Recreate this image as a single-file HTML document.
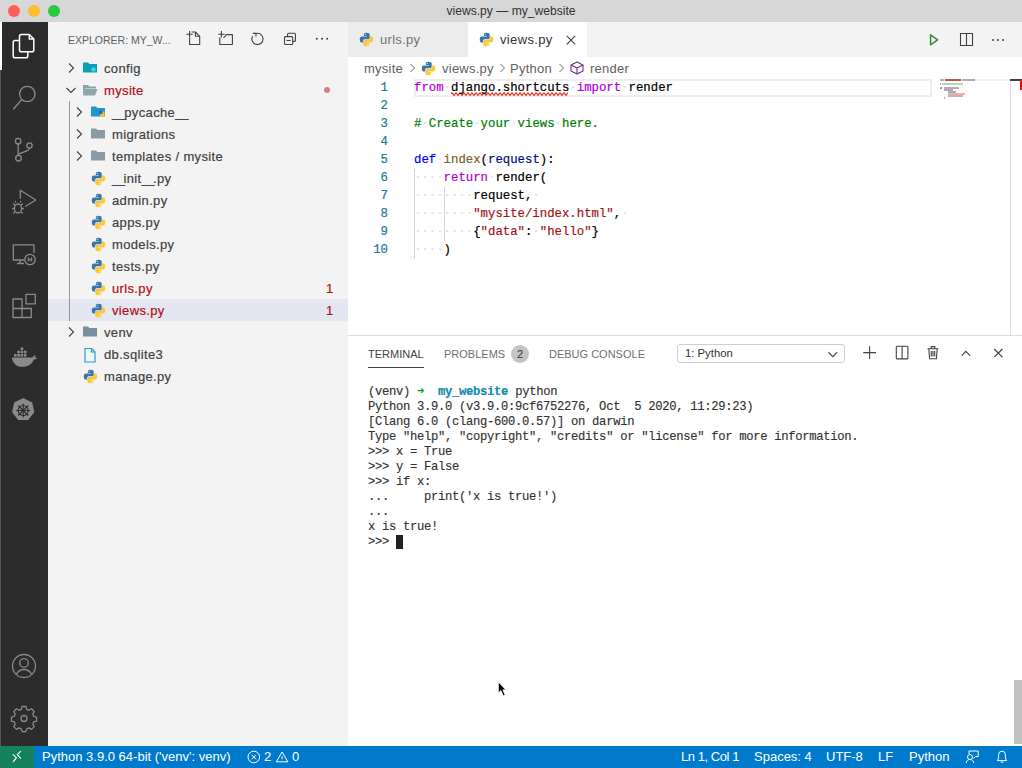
<!DOCTYPE html>
<html><head><meta charset="utf-8">
<style>
*{box-sizing:border-box;margin:0;padding:0}
html,body{width:1022px;height:768px;overflow:hidden;background:#fff;font-family:"Liberation Sans",sans-serif}
.abs{position:absolute}
svg{position:absolute;overflow:visible}
#title{left:0;top:0;width:1022px;height:22px;background:#d7d7d7;color:#333;font-size:12.1px;text-align:center;line-height:23px}
.tl{position:absolute;top:5px;width:12px;height:12px;border-radius:50%}
#act{left:0;top:22px;width:48px;height:724px;background:#2c2c2c}
#side{left:48px;top:22px;width:300px;height:724px;background:#f3f3f3}
#tabs{left:348px;top:22px;width:674px;height:35px;background:#f3f3f3}
#editor{left:348px;top:57px;width:674px;height:278px;background:#fff}
#panel{left:348px;top:335px;width:674px;height:411px;background:#fff;border-top:1px solid #dcdcdc}
#status{left:0;top:746px;width:1022px;height:22px;background:#007acc;color:#fff;font-size:13px;line-height:22px;white-space:nowrap}
.row{position:absolute;left:0;width:300px;height:22px;font-size:13px;line-height:22px;color:#424242;white-space:nowrap;letter-spacing:0.35px;-webkit-text-stroke:0.2px}
.row .t{position:absolute;top:1px}
.code{position:absolute;left:0;top:22px;width:674px;font-family:"Liberation Mono",monospace;font-size:12.33px;white-space:pre;-webkit-text-stroke:0.2px}
.ln{position:absolute;left:0;width:40px;text-align:right;color:#237893;height:18px;line-height:18px}
.cl{position:absolute;left:66px;height:18px;line-height:18px;color:#000}
.k{color:#af00db}.d{color:#0000ff}.f{color:#795e26}.p{color:#001080}.s{color:#a31515}.c{color:#008000}.w{color:#dedede}
.term{position:absolute;left:20px;top:49px;font-family:"Liberation Mono",monospace;font-size:12.2px;letter-spacing:-0.31px;white-space:pre;color:#333;line-height:15px;-webkit-text-stroke:0.15px #333}
.ptab{position:absolute;top:11px;font-size:11px;line-height:14px;color:#6f6f6f;white-space:nowrap}
.sb{position:absolute;top:0}
</style></head><body>
<svg width="0" height="0" style="position:absolute"><defs>
<symbol id="py" viewBox="0 0 16 16">
<path d="M7.8 0.8C5.2 0.8 5.2 2 5.2 2.6V4.3H8.4V4.9H3C1.6 4.9 0.8 6 0.8 8s0.8 3.2 2 3.2H4.4V9.4C4.4 8.3 5.2 7.6 6.2 7.6H9.8C10.8 7.6 11.4 6.9 11.4 6V2.6C11.4 1.6 10.4 0.8 7.8 0.8z" fill="#3a75b0"/>
<path d="M8.2 15.2C10.8 15.2 10.8 14 10.8 13.4V11.7H7.6V11.1H13C14.4 11.1 15.2 10 15.2 8s-0.8-3.2-2-3.2H11.6V6.6C11.6 7.7 10.8 8.4 9.8 8.4H6.2C5.2 8.4 4.6 9.1 4.6 10V13.4C4.6 14.4 5.6 15.2 8.2 15.2z" fill="#fdc834"/>
<circle cx="6.7" cy="2.6" r="0.6" fill="#fff"/><circle cx="9.3" cy="13.4" r="0.6" fill="#fff"/>
</symbol></defs></svg>
<div id="title" class="abs">views.py — my_website
  <div class="tl" style="left:8px;background:#fe5f57"></div>
  <div class="tl" style="left:28px;background:#febc2e"></div>
  <div class="tl" style="left:48px;background:#28c840"></div>
</div>

<div id="act" class="abs">
  <div class="abs" style="left:0;top:48px;width:1px;height:676px;background:#55555a"></div>
  <div class="abs" style="left:0;top:0;width:2px;height:48px;background:#fff"></div>
  <svg width="48" height="724" style="left:0;top:-22px" fill="none" stroke-linejoin="round">
    <!-- files -->
    <g stroke="#fff" stroke-width="1.5">
      <path d="M19.5 40.5h-4.5a1.8 1.8 0 0 0-1.8 1.8V56a1.8 1.8 0 0 0 1.8 1.8h11a1.8 1.8 0 0 0 1.8-1.8v-4"/>
      <path d="M21.3 34.5h8l4.5 4.5v11a1.8 1.8 0 0 1-1.8 1.8h-10.7a1.8 1.8 0 0 1-1.8-1.8V36.3a1.8 1.8 0 0 1 1.8-1.8z"/>
      <path d="M29.3 34.5v4.5h4.5"/>
    </g>
    <g stroke="#8a8a8a" stroke-width="1.3">
      <!-- search -->
      <circle cx="27.3" cy="94" r="7.7"/><path d="M21.8 99.5 13.3 109.3"/>
      <!-- scm -->
      <circle cx="18.2" cy="141.2" r="2.8"/><circle cx="29.5" cy="145.5" r="2.6"/><circle cx="18.5" cy="158.2" r="2.8"/>
      <path d="M18.2 144v11.4"/><path d="M29.5 148.1c0 4.5-11 3.5-11 7.3"/>
      <!-- debug -->
      <path d="M20.3 198.5v-8.2L35.8 200l-10.5 6.5"/>
      <ellipse cx="18" cy="208.5" rx="3.6" ry="4.5"/>
      <path d="M13.3 203.5l1.8 1.8M22.7 203.5l-1.8 1.8M12 208.5h2.4M24 208.5h-2.4M13.3 213.5l1.8-1.8M22.7 213.5l-1.8-1.8M16 202.5l-1-1.5M20 202.5l1-1.5"/>
      <!-- remote explorer -->
      <path d="M24.5 260H13.3V244.8h20.7V253"/><path d="M17 263.5h7M20 260v3.5"/>
      <circle cx="30" cy="259.5" r="5.2"/><path d="M27.8 257.8l1.5 1.7-1.5 1.7M32.2 257.8l-1.5 1.7 1.5 1.7"/>
      <!-- extensions -->
      <path d="M13 299h9v9.5h-9zM13 308.5h9v9h-9zM22 308.5h9.3v9H22z"/><path d="M26 294.3h9.3v9.5H26z"/>
      <!-- accounts -->
      <circle cx="24" cy="666" r="11.5"/><circle cx="24" cy="663" r="4.3"/><path d="M16.3 674.5c1.8-3.5 4.5-5 7.7-5s5.9 1.5 7.7 5"/>
      <!-- settings -->
      <path d="M22 706.5h4l.7 2.8 2.3 1 2.5-1.5 2.8 2.8-1.5 2.5 1 2.3 2.8.7v4l-2.8.7-1 2.3 1.5 2.5-2.8 2.8-2.5-1.5-2.3 1-.7 2.8h-4l-.7-2.8-2.3-1-2.5 1.5-2.8-2.8 1.5-2.5-1-2.3-2.8-.7v-4l2.8-.7 1-2.3-1.5-2.5 2.8-2.8 2.5 1.5 2.3-1z"/>
      <circle cx="24" cy="718.5" r="3"/>
    </g>
    <!-- docker -->
    <path d="M11.8 357.5h21c.5-1.5 1.5-2.5 2.3-2.5.3 1 .2 1.8 0 2.2 1 .2 1.5.5 1.9 1-1 1-2.2 1.3-3.2 1.3-1.5 4.5-5.5 7.3-11.5 7.3-6 0-9.5-3.5-10.5-9.3z" fill="#8a8a8a"/>
    <g fill="#8a8a8a"><rect x="14" y="354" width="2.6" height="2.6"/><rect x="17.3" y="354" width="2.6" height="2.6"/><rect x="20.6" y="354" width="2.6" height="2.6"/><rect x="23.9" y="354" width="2.6" height="2.6"/><rect x="17.3" y="350.7" width="2.6" height="2.6"/><rect x="20.6" y="350.7" width="2.6" height="2.6"/><rect x="23.9" y="350.7" width="2.6" height="2.6"/><rect x="20.6" y="347.4" width="2.6" height="2.6"/></g>
    <!-- kubernetes -->
    <path d="M23.2 399l8.3 4 2 9-5.7 7.2h-9.2l-5.7-7.2 2-9z" fill="#8a8a8a" stroke="#8a8a8a" stroke-width="1.5"/>
    <g stroke="#2c2c2c" stroke-width="1.1"><circle cx="23.2" cy="410.5" r="5"/><path d="M23.2 403.5v14M16.2 410.5h14M18.2 405.5l10 10M28.2 405.5l-10 10"/></g>
  </svg>
</div>

<div id="side" class="abs">
  <div class="abs" style="left:20px;top:11px;font-size:10.5px;color:#616161;line-height:14px;white-space:nowrap">EXPLORER: MY_W...</div>
  <!-- header icons -->
  <svg width="300" height="40" style="left:-48px;top:-22px" fill="none" stroke="#424242" stroke-width="1.1" stroke-linejoin="round">
    <path d="M186.3 34.2H192.8M189.6 31V37.4"/>
    <path d="M189.6 37.4V44.5H199.7V36.3L195.4 32H191.6"/><path d="M195.4 32V36.3H199.7"/>
    <path d="M218.2 34.2H224.6M221.4 31V37.4"/>
    <path d="M219.8 37.4V44.5H232.4V34.6H226.2L224.4 37.2H223.2"/>
    <path d="M255.8 33.6A5.6 5.6 0 1 1 252.6 36.2"/><path d="M252.8 33.4H256V36.6"/>
    <rect x="284.5" y="36.6" width="8.2" height="7.9" rx="1"/><path d="M286.5 40.5H290.7"/>
    <path d="M287.6 36.6V34.3a1 1 0 0 1 1-1H294.4a1 1 0 0 1 1 1V40.4a1 1 0 0 1-1 1H292.7"/>
    <g fill="#424242" stroke="none"><circle cx="316.8" cy="38.8" r="1"/><circle cx="322" cy="38.8" r="1"/><circle cx="327.1" cy="38.8" r="1"/></g>
  </svg>

  <!-- tree -->
  <div class="row" style="top:277px;background:#e4e6f1"></div>
  <div class="abs" style="left:21px;top:79px;width:1px;height:220px;background:#9a9a9a"></div>

  <svg width="16" height="16" style="left:15px;top:38px" fill="none" stroke="#424242" stroke-width="1.1"><path d="M6 3.5l4.5 4.5L6 12.5"/></svg>
  <svg width="16" height="16" style="left:34px;top:39px"><path d="M1 1.5h5l1.5 1.5H15v8.5H1z" fill="#0a9fb2"/><circle cx="11.5" cy="8.5" r="2.2" fill="#3fd6e6"/></svg>
  <div class="row" style="top:35px"><span class="t" style="left:56px">config</span></div>

  <svg width="16" height="16" style="left:15px;top:60px" fill="none" stroke="#424242" stroke-width="1.1"><path d="M3.5 6l4.5 4.5L12.5 6"/></svg>
  <svg width="16" height="16" style="left:34px;top:61px"><path d="M1 2h5l1.5 1.5H14v2H3.5L1 12z" fill="#8ea0aa"/><path d="M3 6h12.5l-2.5 6.5H1z" fill="#90a4ae"/></svg>
  <div class="row" style="top:57px"><span class="t" style="left:56px;color:#b01011">mysite</span></div>
  <div class="abs" style="left:276px;top:65px;width:6px;height:6px;border-radius:50%;background:#d57f86"></div>

  <svg width="16" height="16" style="left:23px;top:82px" fill="none" stroke="#424242" stroke-width="1.1"><path d="M6 3.5l4.5 4.5L6 12.5"/></svg>
  <svg width="16" height="16" style="left:42px;top:83px"><path d="M1 1.5h5l1.5 1.5H15v8.5H1z" fill="#2196d3"/><path d="M10 6.5h4.5v5.5H10z" fill="#fdc52f"/><path d="M9 5.5h3.5v3.5H9z" fill="#2c6ea5"/></svg>
  <div class="row" style="top:79px"><span class="t" style="left:64px"><span style="letter-spacing:-1.1px">__</span>pycache<span style="letter-spacing:-1.1px">__</span></span></div>

  <svg width="16" height="16" style="left:23px;top:104px" fill="none" stroke="#424242" stroke-width="1.1"><path d="M6 3.5l4.5 4.5L6 12.5"/></svg>
  <svg width="16" height="16" style="left:42px;top:105px"><path d="M1 1.5h5l1.5 1.5H15v8.5H1z" fill="#8a9ba5"/></svg>
  <div class="row" style="top:101px"><span class="t" style="left:64px">migrations</span></div>

  <svg width="16" height="16" style="left:23px;top:126px" fill="none" stroke="#424242" stroke-width="1.1"><path d="M6 3.5l4.5 4.5L6 12.5"/></svg>
  <svg width="16" height="16" style="left:42px;top:127px"><path d="M1 1.5h5l1.5 1.5H15v8.5H1z" fill="#8a9ba5"/></svg>
  <div class="row" style="top:123px"><span class="t" style="left:64px">templates / mysite</span></div>

  <svg width="15" height="15" style="left:43px;top:149px"><use href="#py"/></svg>
  <svg width="15" height="15" style="left:43px;top:171px"><use href="#py"/></svg>
  <svg width="15" height="15" style="left:43px;top:193px"><use href="#py"/></svg>
  <svg width="15" height="15" style="left:43px;top:215px"><use href="#py"/></svg>
  <svg width="15" height="15" style="left:43px;top:237px"><use href="#py"/></svg>
  <svg width="15" height="15" style="left:43px;top:259px"><use href="#py"/></svg>
  <svg width="15" height="15" style="left:43px;top:281px"><use href="#py"/></svg>
  <svg width="15" height="15" style="left:35px;top:347px"><use href="#py"/></svg>
  <div class="row" style="top:145px"><span class="t" style="left:64px"><span style="letter-spacing:-1.5px">__</span>init<span style="letter-spacing:-1.5px">__</span>.py</span></div>
  <div class="row" style="top:167px"><span class="t" style="left:64px">admin.py</span></div>
  <div class="row" style="top:189px"><span class="t" style="left:64px">apps.py</span></div>
  <div class="row" style="top:211px"><span class="t" style="left:64px">models.py</span></div>
  <div class="row" style="top:233px"><span class="t" style="left:64px">tests.py</span></div>
  <div class="row" style="top:255px"><span class="t" style="left:64px;color:#b01011">urls.py</span><span class="t" style="left:278px;color:#b01011">1</span></div>
  <div class="row" style="top:277px"><span class="t" style="left:64px;color:#b01011">views.py</span><span class="t" style="left:278px;color:#b01011">1</span></div>

  <svg width="16" height="16" style="left:15px;top:302px" fill="none" stroke="#424242" stroke-width="1.1"><path d="M6 3.5l4.5 4.5L6 12.5"/></svg>
  <svg width="16" height="16" style="left:34px;top:303px"><path d="M1 1.5h5l1.5 1.5H15v8.5H1z" fill="#78909c"/></svg>
  <div class="row" style="top:299px"><span class="t" style="left:56px">venv</span></div>

  <svg width="16" height="16" style="left:34px;top:325px" fill="none" stroke="#2b9bd6" stroke-width="1.2"><path d="M3 1.5h6.5l3.5 3.5v10H3z"/><path d="M9.5 1.5V5H13"/></svg>
  <div class="row" style="top:321px"><span class="t" style="left:56px">db.sqlite3</span></div>
  <div class="row" style="top:343px"><span class="t" style="left:56px">manage.py</span></div>
</div>

<div id="tabs" class="abs">
  <div class="abs" style="left:0;top:0;width:120px;height:35px;background:#ececec;color:#717171;font-size:13px;line-height:35px;letter-spacing:0.3px"><span class="abs" style="left:32px">urls.py</span><svg width="15" height="15" style="left:11px;top:10px"><use href="#py"/></svg></div>
  <div class="abs" style="left:120px;top:0;width:119px;height:35px;background:#fff;color:#333;font-size:13px;line-height:35px;letter-spacing:0.35px"><span class="abs" style="left:32px">views.py</span><svg width="15" height="15" style="left:11px;top:10px"><use href="#py"/></svg></div>
  <svg width="16" height="16" style="left:216px;top:10px" fill="none" stroke="#424242" stroke-width="1.15"><path d="M2.8 3.9L11.2 12.3M11.2 3.9L2.8 12.3"/></svg>
  <!-- right actions -->
  <svg width="16" height="16" style="left:577px;top:10px" fill="none" stroke="#388a34" stroke-width="1.5" stroke-linejoin="round"><path d="M5.6 2.8V12.8L12.6 7.8z"/></svg>
  <svg width="16" height="16" style="left:610px;top:10px" fill="none" stroke="#424242" stroke-width="1.1"><path d="M2.5 1.5h12v12h-12zM8.5 1.5v12"/></svg>
  <svg width="16" height="16" style="left:642px;top:10px" fill="#424242"><circle cx="3" cy="8" r="1"/><circle cx="8" cy="8" r="1"/><circle cx="13" cy="8" r="1"/></svg>
</div>

<div id="editor" class="abs">
  <div class="abs" style="left:16px;top:1px;height:22px;line-height:22px;font-size:13px;color:#616161;white-space:pre;letter-spacing:0.25px">mysite</div>
  <svg width="8" height="22" style="left:61px;top:0" fill="none" stroke="#616161" stroke-width="1"><path d="M1.5 7l4 4-4 4"/></svg>
  <svg width="15" height="15" style="left:73px;top:4px"><use href="#py"/></svg>
  <div class="abs" style="left:94px;top:1px;height:22px;line-height:22px;font-size:13px;color:#616161;white-space:pre;letter-spacing:0.25px">views.py</div>
  <svg width="8" height="22" style="left:151px;top:0" fill="none" stroke="#616161" stroke-width="1"><path d="M1.5 7l4 4-4 4"/></svg>
  <div class="abs" style="left:162px;top:1px;height:22px;line-height:22px;font-size:13px;color:#616161;white-space:pre;letter-spacing:0.25px">Python</div>
  <svg width="8" height="22" style="left:210px;top:0" fill="none" stroke="#616161" stroke-width="1"><path d="M1.5 7l4 4-4 4"/></svg>
  <svg width="16" height="16" style="left:221px;top:3px" fill="none" stroke="#652d90" stroke-width="1.1" stroke-linejoin="round"><path d="M8 2l6 3v6l-6 3-6-3V5z"/><path d="M2 5l6 3 6-3M8 8v6"/></svg>
  <div class="abs" style="left:242px;top:1px;height:22px;line-height:22px;font-size:13px;color:#616161;white-space:pre;letter-spacing:0.25px">render</div>

  <!-- current line highlight -->
  <div class="abs" style="left:66px;top:22px;width:518px;height:18px;border:2px solid #eeeeee"></div>
  <!-- indent guides -->
  <div class="abs" style="left:66px;top:112px;width:1px;height:90px;background:#d3d3d3"></div>
  <div class="abs" style="left:96px;top:130px;width:1px;height:54px;background:#d3d3d3"></div>
  <!-- squiggle -->
  <svg width="117" height="6" style="left:103px;top:34px;overflow:hidden"><path d="M0 3 q1 -2.6 2 0 q1 2.6 2 0 q1 -2.6 2 0 q1 2.6 2 0 q1 -2.6 2 0 q1 2.6 2 0 q1 -2.6 2 0 q1 2.6 2 0 q1 -2.6 2 0 q1 2.6 2 0 q1 -2.6 2 0 q1 2.6 2 0 q1 -2.6 2 0 q1 2.6 2 0 q1 -2.6 2 0 q1 2.6 2 0 q1 -2.6 2 0 q1 2.6 2 0 q1 -2.6 2 0 q1 2.6 2 0 q1 -2.6 2 0 q1 2.6 2 0 q1 -2.6 2 0 q1 2.6 2 0 q1 -2.6 2 0 q1 2.6 2 0 q1 -2.6 2 0 q1 2.6 2 0 q1 -2.6 2 0 q1 2.6 2 0 q1 -2.6 2 0 q1 2.6 2 0 q1 -2.6 2 0 q1 2.6 2 0 q1 -2.6 2 0 q1 2.6 2 0 q1 -2.6 2 0 q1 2.6 2 0 q1 -2.6 2 0 q1 2.6 2 0 q1 -2.6 2 0 q1 2.6 2 0 q1 -2.6 2 0 q1 2.6 2 0 q1 -2.6 2 0 q1 2.6 2 0 q1 -2.6 2 0 q1 2.6 2 0 q1 -2.6 2 0 q1 2.6 2 0 q1 -2.6 2 0 q1 2.6 2 0 q1 -2.6 2 0 q1 2.6 2 0 q1 -2.6 2 0 q1 2.6 2 0 q1 -2.6 2 0 q1 2.6 2 0 q1 -2.6 2 0 q1 2.6 2 0" fill="none" stroke="#e51400" stroke-width="1.1"/></svg>
  <div class="code">
    <div class="ln" style="top:0">1</div>
    <div class="ln" style="top:18px">2</div>
    <div class="ln" style="top:36px">3</div>
    <div class="ln" style="top:54px">4</div>
    <div class="ln" style="top:72px">5</div>
    <div class="ln" style="top:90px">6</div>
    <div class="ln" style="top:108px">7</div>
    <div class="ln" style="top:126px">8</div>
    <div class="ln" style="top:144px">9</div>
    <div class="ln" style="top:162px">10</div>
    <div class="cl" style="top:0"><span class="k">from</span><span class="w">·</span>django.shortcuts<span class="w">·</span><span class="k">import</span><span class="w">·</span>render</div>
    <div class="cl" style="top:36px"><span class="c">#<span class="w">·</span>Create<span class="w">·</span>your<span class="w">·</span>views<span class="w">·</span>here.</span></div>
    <div class="cl" style="top:72px"><span class="d">def</span><span class="w">·</span><span class="f">index</span>(<span class="p">request</span>):</div>
    <div class="cl" style="top:90px"><span class="w">····</span><span class="k">return</span><span class="w">·</span>render(</div>
    <div class="cl" style="top:108px"><span class="w">········</span>request,<span class="w">·</span></div>
    <div class="cl" style="top:126px"><span class="w">········</span><span class="s">"mysite/index.html"</span>,<span class="w">·</span></div>
    <div class="cl" style="top:144px"><span class="w">········</span>{<span class="s">"data"</span>:<span class="w">·</span><span class="s">"hello"</span>}</div>
    <div class="cl" style="top:162px"><span class="w">····</span>)</div>
  </div>

  <!-- minimap -->
  <div class="abs" style="left:0;top:0;width:662px;height:278px;opacity:0.75">
  <div class="abs" style="left:592px;top:22px;width:70px;height:2px;background:#e6eef6"></div>
  <div class="abs" style="left:592px;top:22px;width:4px;height:2px;background:#b08ac0"></div>
  <div class="abs" style="left:597px;top:22px;width:16px;height:2px;background:#a02020"></div>
  <div class="abs" style="left:614px;top:22px;width:13px;height:2px;background:#9a88b0"></div>
  <div class="abs" style="left:592px;top:26px;width:1px;height:2px;background:#6a9a6a"></div>
  <div class="abs" style="left:594px;top:26px;width:21px;height:2px;background:#a0c8a0"></div>
  <div class="abs" style="left:592px;top:30px;width:2px;height:2px;background:#6a6ac8"></div>
  <div class="abs" style="left:596px;top:30px;width:15px;height:2px;background:#9a90a8"></div>
  <div class="abs" style="left:596px;top:32px;width:9px;height:2px;background:#a08ab0"></div>
  <div class="abs" style="left:600px;top:34px;width:8px;height:2px;background:#8890b0"></div>
  <div class="abs" style="left:600px;top:36px;width:17px;height:2px;background:#d8a090"></div>
  <div class="abs" style="left:600px;top:38px;width:15px;height:2px;background:#c89090"></div>
  <div class="abs" style="left:596px;top:40px;width:1px;height:2px;background:#888"></div>
  </div>
  <div class="abs" style="left:662px;top:22px;width:1px;height:256px;background:#dcdcf0"></div>
  <div class="abs" style="left:662px;top:22px;width:12px;height:2px;background:#404040"></div>
  <div class="abs" style="left:672px;top:23px;width:2px;height:10px;background:#e51400"></div>
</div>

<div id="panel" class="abs">
  <div class="ptab" style="left:20px;color:#424242">TERMINAL</div>
  <div class="abs" style="left:20px;top:31px;width:56px;height:1px;background:#424242"></div>
  <div class="ptab" style="left:96px">PROBLEMS</div>
  <div class="abs" style="left:163px;top:9px;width:18px;height:18px;border-radius:50%;background:#c4c4c4;color:#333;font-size:11px;line-height:18px;text-align:center">2</div>
  <div class="ptab" style="left:201px">DEBUG CONSOLE</div>
  <div class="abs" style="left:329px;top:8px;width:168px;height:19px;border:1px solid #cecece;border-radius:3px;background:#fff;font-size:11.3px;line-height:17px;color:#333;padding-left:7px">1: Python</div>
  <svg width="1022" height="380" style="left:-348px;top:-336px" fill="none" stroke="#424242" stroke-width="1.1">
    <path d="M828.4 352.2L832.8 356.6 837.2 352.2"/>
    <path d="M869.6 346.2V359M863.2 352.6H876"/>
    <rect x="896.3" y="346.3" width="11.6" height="12.6" rx="1"/><path d="M902.1 346.3V358.9"/>
    <path d="M927.5 348.7H938.4M931.2 348.7V346.6H934.8V348.7M928.8 348.7L929.6 358.8H936.4L937.2 348.7M931.3 351V356.6M933 351V356.6M934.7 351V356.6"/>
    <path d="M961.7 355.6L965.9 351.3 970.1 355.6"/>
    <path d="M994.2 349L1002.4 357.2M1002.4 349L994.2 357.2" stroke-width="1.2"/>
  </svg>

  <div class="term">(venv) <span style="color:#00bc00">➜</span>  <b style="color:#0598bc">my_website</b> python
Python 3.9.0 (v3.9.0:9cf6752276, Oct  5 2020, 11:29:23)
[Clang 6.0 (clang-600.0.57)] on darwin
Type "help", "copyright", "credits" or "license" for more information.
&gt;&gt;&gt; x = True
&gt;&gt;&gt; y = False
&gt;&gt;&gt; if x:
...     print('x is true!')
...
x is true!
&gt;&gt;&gt; <span style="background:#222;-webkit-text-stroke:0">&nbsp;</span></div>
  <!-- scrollbar -->
  <div class="abs" style="left:666px;top:344px;width:8px;height:64px;background:#c1c1c1"></div>
  <!-- mouse cursor -->
  <svg width="14" height="20" style="left:149px;top:343px"><path d="M1.2 2.8V14.2L3.9 11.7 6.2 16.9 8.3 16 6 10.9H9.2Z" fill="#000" stroke="#fff" stroke-width="1" stroke-linejoin="round"/></svg>
</div>

<div id="status" class="abs">
  <div class="abs" style="left:0;top:0;width:34px;height:22px;background:#16825d"></div>
  <svg width="16" height="16" style="left:10px;top:3px" fill="none" stroke="#fff" stroke-width="1.1"><path d="M2.9 5.4L6.4 8.7 3.1 12.9M10.9 2.2L7.3 5.5 10.9 9.6"/></svg>
  <span class="sb" style="left:42px">Python 3.9.0 64-bit ('venv': venv)</span>
  <svg width="16" height="16" style="left:246px;top:3px" fill="none" stroke="#fff" stroke-width="1"><circle cx="7.8" cy="8" r="5.8"/><path d="M5.6 5.8l4.4 4.4M10 5.8l-4.4 4.4"/></svg>
  <span class="sb" style="left:264px">2</span>
  <svg width="16" height="16" style="left:274px;top:3px" fill="none" stroke="#fff" stroke-width="1" stroke-linejoin="round"><path d="M8.1 3L13.9 12.8H2.3Z"/><path d="M8.1 7.2V10.2"/></svg>
  <span class="sb" style="left:292px">0</span>
  <span class="sb" style="left:681px;letter-spacing:-0.45px">Ln 1, Col 1</span>
  <span class="sb" style="left:754px">Spaces: 4</span>
  <span class="sb" style="left:826px">UTF-8</span>
  <span class="sb" style="left:878px">LF</span>
  <span class="sb" style="left:909px">Python</span>
  <svg width="16" height="16" style="left:964px;top:3px" fill="none" stroke="#fff" stroke-width="1"><circle cx="6" cy="8" r="2.5"/><path d="M2.2 14C2.5 11.6 4 10.5 6 10.5S9.5 11.6 9.8 14M5 5V2H14.2V7.6H11.6L9.6 9.4"/></svg>
  <svg width="16" height="16" style="left:994px;top:3px" fill="none" stroke="#fff" stroke-width="1"><path d="M3.2 11.6Q4.6 10.6 4.6 7.5V5.6A3.4 3.4 0 0 1 11.4 5.6V7.5Q11.4 10.6 12.8 11.6ZM6.6 12.8Q8 14 9.4 12.8"/></svg>
</div>
</body></html>
